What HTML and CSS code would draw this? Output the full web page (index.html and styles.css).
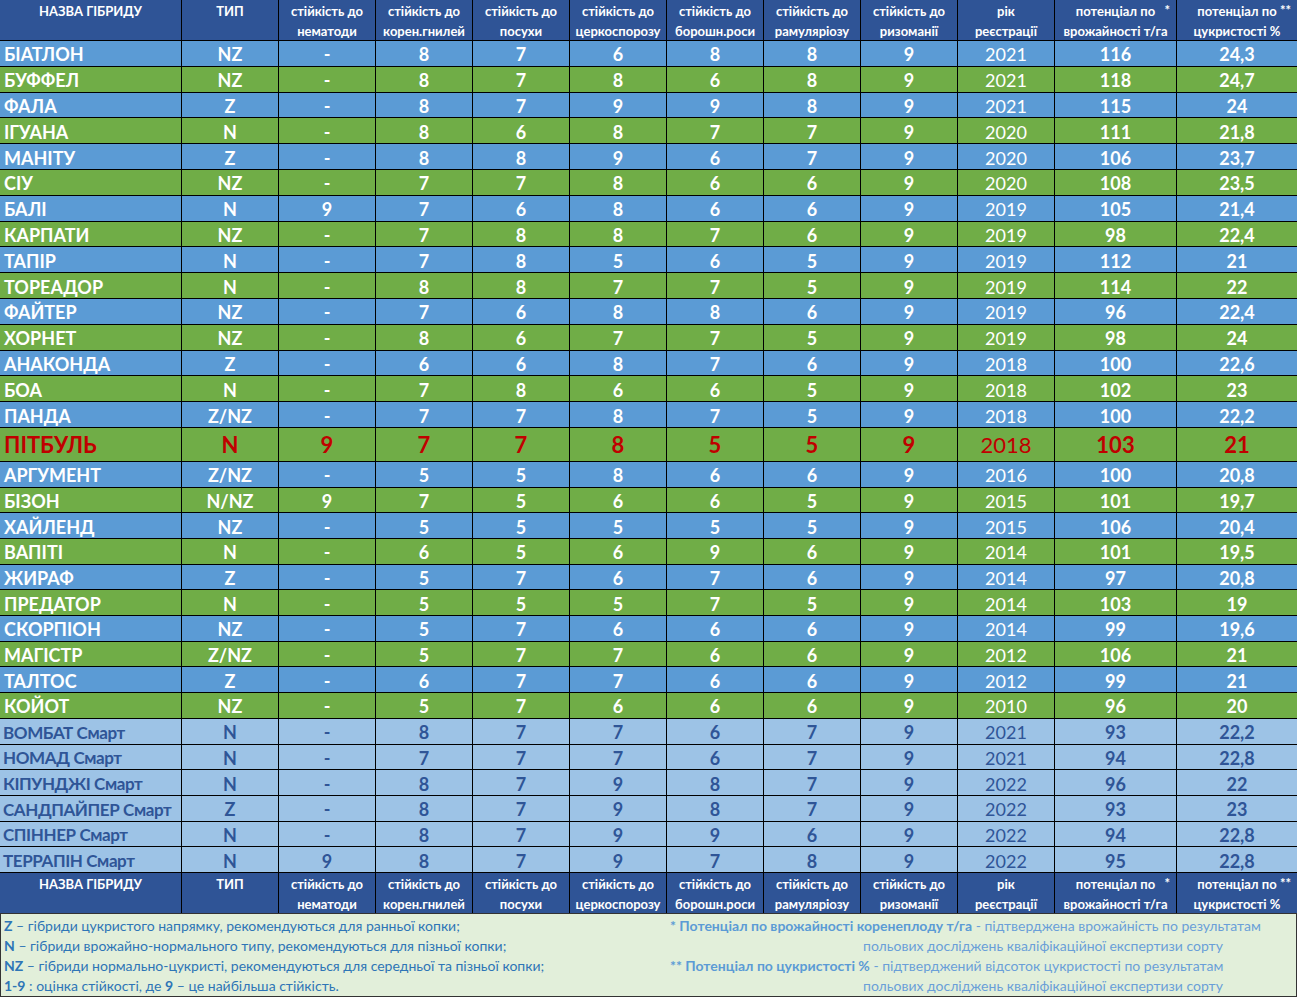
FILE: index.html
```html
<!DOCTYPE html>
<html lang="uk">
<head>
<meta charset="utf-8">
<title>Гібриди цукрового буряка</title>
<link rel="stylesheet" href="styles.css">
</head>
<body>
<div class="sheet">
  <div class="r h">
    <div>НАЗВА ГІБРИДУ</div><div>ТИП</div>
    <div>стійкість до<br>нематоди</div><div>стійкість до<br>корен.гнилей</div><div>стійкість до<br>посухи</div><div>стійкість до<br>церкоспорозу</div><div>стійкість до<br>борошн.роси</div><div>стійкість до<br>рамуляріозу</div><div>стійкість до<br>ризоманії</div><div>рік<br>реєстрації</div><div><span class="star">потенціал по <i>*</i></span>врожайності т/га</div><div><span class="star">потенціал по <i>**</i></span>цукристості %</div>
  </div>
  <div class="r b"><div>БІАТЛОН</div><div>NZ</div><div>-</div><div>8</div><div>7</div><div>6</div><div>8</div><div>8</div><div>9</div><div class="y">2021</div><div>116</div><div>24,3</div></div>
  <div class="r g"><div>БУФФЕЛ</div><div>NZ</div><div>-</div><div>8</div><div>7</div><div>8</div><div>6</div><div>8</div><div>9</div><div class="y">2021</div><div>118</div><div>24,7</div></div>
  <div class="r b"><div>ФАЛА</div><div>Z</div><div>-</div><div>8</div><div>7</div><div>9</div><div>9</div><div>8</div><div>9</div><div class="y">2021</div><div>115</div><div>24</div></div>
  <div class="r g"><div>ІГУАНА</div><div>N</div><div>-</div><div>8</div><div>6</div><div>8</div><div>7</div><div>7</div><div>9</div><div class="y">2020</div><div>111</div><div>21,8</div></div>
  <div class="r b"><div>МАНІТУ</div><div>Z</div><div>-</div><div>8</div><div>8</div><div>9</div><div>6</div><div>7</div><div>9</div><div class="y">2020</div><div>106</div><div>23,7</div></div>
  <div class="r g"><div>СІУ</div><div>NZ</div><div>-</div><div>7</div><div>7</div><div>8</div><div>6</div><div>6</div><div>9</div><div class="y">2020</div><div>108</div><div>23,5</div></div>
  <div class="r b"><div>БАЛІ</div><div>N</div><div>9</div><div>7</div><div>6</div><div>8</div><div>6</div><div>6</div><div>9</div><div class="y">2019</div><div>105</div><div>21,4</div></div>
  <div class="r g"><div>КАРПАТИ</div><div>NZ</div><div>-</div><div>7</div><div>8</div><div>8</div><div>7</div><div>6</div><div>9</div><div class="y">2019</div><div>98</div><div>22,4</div></div>
  <div class="r b"><div>ТАПІР</div><div>N</div><div>-</div><div>7</div><div>8</div><div>5</div><div>6</div><div>5</div><div>9</div><div class="y">2019</div><div>112</div><div>21</div></div>
  <div class="r g"><div>ТОРЕАДОР</div><div>N</div><div>-</div><div>8</div><div>8</div><div>7</div><div>7</div><div>5</div><div>9</div><div class="y">2019</div><div>114</div><div>22</div></div>
  <div class="r b"><div>ФАЙТЕР</div><div>NZ</div><div>-</div><div>7</div><div>6</div><div>8</div><div>8</div><div>6</div><div>9</div><div class="y">2019</div><div>96</div><div>22,4</div></div>
  <div class="r g"><div>ХОРНЕТ</div><div>NZ</div><div>-</div><div>8</div><div>6</div><div>7</div><div>7</div><div>5</div><div>9</div><div class="y">2019</div><div>98</div><div>24</div></div>
  <div class="r b"><div>АНАКОНДА</div><div>Z</div><div>-</div><div>6</div><div>6</div><div>8</div><div>7</div><div>6</div><div>9</div><div class="y">2018</div><div>100</div><div>22,6</div></div>
  <div class="r g"><div>БОА</div><div>N</div><div>-</div><div>7</div><div>8</div><div>6</div><div>6</div><div>5</div><div>9</div><div class="y">2018</div><div>102</div><div>23</div></div>
  <div class="r b"><div>ПАНДА</div><div>Z/NZ</div><div>-</div><div>7</div><div>7</div><div>8</div><div>7</div><div>5</div><div>9</div><div class="y">2018</div><div>100</div><div>22,2</div></div>
  <div class="r p"><div>ПІТБУЛЬ</div><div>N</div><div>9</div><div>7</div><div>7</div><div>8</div><div>5</div><div>5</div><div>9</div><div class="y">2018</div><div>103</div><div>21</div></div>
  <div class="r b"><div>АРГУМЕНТ</div><div>Z/NZ</div><div>-</div><div>5</div><div>5</div><div>8</div><div>6</div><div>6</div><div>9</div><div class="y">2016</div><div>100</div><div>20,8</div></div>
  <div class="r g"><div>БІЗОН</div><div>N/NZ</div><div>9</div><div>7</div><div>5</div><div>6</div><div>6</div><div>5</div><div>9</div><div class="y">2015</div><div>101</div><div>19,7</div></div>
  <div class="r b"><div>ХАЙЛЕНД</div><div>NZ</div><div>-</div><div>5</div><div>5</div><div>5</div><div>5</div><div>5</div><div>9</div><div class="y">2015</div><div>106</div><div>20,4</div></div>
  <div class="r g"><div>ВАПІТІ</div><div>N</div><div>-</div><div>6</div><div>5</div><div>6</div><div>9</div><div>6</div><div>9</div><div class="y">2014</div><div>101</div><div>19,5</div></div>
  <div class="r b"><div>ЖИРАФ</div><div>Z</div><div>-</div><div>5</div><div>7</div><div>6</div><div>7</div><div>6</div><div>9</div><div class="y">2014</div><div>97</div><div>20,8</div></div>
  <div class="r g"><div>ПРЕДАТОР</div><div>N</div><div>-</div><div>5</div><div>5</div><div>5</div><div>7</div><div>5</div><div>9</div><div class="y">2014</div><div>103</div><div>19</div></div>
  <div class="r b"><div>СКОРПІОН</div><div>NZ</div><div>-</div><div>5</div><div>7</div><div>6</div><div>6</div><div>6</div><div>9</div><div class="y">2014</div><div>99</div><div>19,6</div></div>
  <div class="r g"><div>МАГІСТР</div><div>Z/NZ</div><div>-</div><div>5</div><div>7</div><div>7</div><div>6</div><div>6</div><div>9</div><div class="y">2012</div><div>106</div><div>21</div></div>
  <div class="r b"><div>ТАЛТОС</div><div>Z</div><div>-</div><div>6</div><div>7</div><div>7</div><div>6</div><div>6</div><div>9</div><div class="y">2012</div><div>99</div><div>21</div></div>
  <div class="r g"><div>КОЙОТ</div><div>NZ</div><div>-</div><div>5</div><div>7</div><div>6</div><div>6</div><div>6</div><div>9</div><div class="y">2010</div><div>96</div><div>20</div></div>
  <div class="r s"><div>ВОМБАТ Смарт</div><div>N</div><div>-</div><div>8</div><div>7</div><div>7</div><div>6</div><div>7</div><div>9</div><div class="y">2021</div><div>93</div><div>22,2</div></div>
  <div class="r s"><div>НОМАД Смарт</div><div>N</div><div>-</div><div>7</div><div>7</div><div>7</div><div>6</div><div>7</div><div>9</div><div class="y">2021</div><div>94</div><div>22,8</div></div>
  <div class="r s"><div>КІПУНДЖІ Смарт</div><div>N</div><div>-</div><div>8</div><div>7</div><div>9</div><div>8</div><div>7</div><div>9</div><div class="y">2022</div><div>96</div><div>22</div></div>
  <div class="r s"><div>САНДПАЙПЕР Смарт</div><div>Z</div><div>-</div><div>8</div><div>7</div><div>9</div><div>8</div><div>7</div><div>9</div><div class="y">2022</div><div>93</div><div>23</div></div>
  <div class="r s"><div>СПІННЕР Смарт</div><div>N</div><div>-</div><div>8</div><div>7</div><div>9</div><div>9</div><div>6</div><div>9</div><div class="y">2022</div><div>94</div><div>22,8</div></div>
  <div class="r s"><div>ТЕРРАПІН Смарт</div><div>N</div><div>9</div><div>8</div><div>7</div><div>9</div><div>7</div><div>8</div><div>9</div><div class="y">2022</div><div>95</div><div>22,8</div></div>
  <div class="r h">
    <div>НАЗВА ГІБРИДУ</div><div>ТИП</div>
    <div>стійкість до<br>нематоди</div><div>стійкість до<br>корен.гнилей</div><div>стійкість до<br>посухи</div><div>стійкість до<br>церкоспорозу</div><div>стійкість до<br>борошн.роси</div><div>стійкість до<br>рамуляріозу</div><div>стійкість до<br>ризоманії</div><div>рік<br>реєстрації</div><div><span class="star">потенціал по <i>*</i></span>врожайності т/га</div><div><span class="star">потенціал по <i>**</i></span>цукристості %</div>
  </div>
</div>
<div class="notes">
  <div class="left">
    <p><b>Z</b> – гібриди цукристого напрямку, рекомендуються для ранньої копки;</p>
    <p><b>N</b> – гібриди врожайно-нормального типу, рекомендуються для пізньої копки;</p>
    <p><b>NZ</b> – гібриди нормально-цукристі, рекомендуються для середньої та пізньої копки;</p>
    <p><b>1-9</b> : оцінка стійкості, де <b>9</b> – це найбільша стійкість.</p>
  </div>
  <div class="right">
    <p><b>* Потенціал по врожайності коренеплоду т/га</b> - підтверджена врожайність по результатам</p>
    <p class="ind">польових досліджень кваліфікаційної експертизи сорту</p>
    <p><b>** Потенціал по цукристості %</b> - підтверджений відсоток цукристості по результатам</p>
    <p class="ind">польових досліджень кваліфікаційної експертизи сорту</p>
  </div>
</div>
</body>
</html>
```
FILE: styles.css
```css
html, body {
  margin: 0;
  padding: 0;
  background: #ffffff;
}

body {
  width: 1297px;
  font-family: Lato, "Open Sans", "Liberation Sans", sans-serif;
}

.sheet {
  display: grid;
  grid-template-columns: 181px repeat(9, 96px) 121px 120px;
  grid-template-rows: 40px repeat(15, 24.8px) 33px repeat(16, 24.7px) 40px;
  gap: 1px;
  background: #000000;
  width: 1297px;
}

.r {
  display: contents;
}

.r > div {
  display: flex;
  align-items: center;
  justify-content: center;
  color: #ffffff;
  font-weight: 700;
  font-size: 18px;
  white-space: nowrap;
  overflow: hidden;
  line-height: 1;
  padding-top: 2px;
  box-sizing: border-box;
}

.r > div:first-child {
  justify-content: flex-start;
  padding-left: 4px;
}

.r > div.y {
  font-weight: 400;
}

.b > div { background: #5b9bd5; }
.g > div { background: #70ad47; }

.p > div {
  background: #70ad47;
  color: #c00000;
  font-size: 22px;
}

.s > div {
  background: #9dc3e6;
  color: #2f5597;
}

.s > div:first-child {
  font-size: 17px;
  letter-spacing: -0.4px;
  padding-left: 3px;
}

.h > div,
.h > div:first-child {
  background: #2f5496;
  font-size: 13px;
  line-height: 20px;
  flex-direction: column;
  justify-content: flex-start;
  align-items: center;
  padding: 1px 0 0 0;
  text-align: center;
}

.star {
  display: block;
  position: relative;
  width: 100%;
  text-align: center;
}

.star i {
  font-style: normal;
  position: absolute;
  right: 6px;
  top: -1px;
}

.notes {
  display: grid;
  grid-template-columns: 666px 1fr;
  box-sizing: border-box;
  width: 1297px;
  height: 84px;
  background: #e2efda;
  border: 1px solid #333333;
  padding: 2px 0 0 3px;
  font-size: 14px;
  line-height: 20px;
  white-space: nowrap;
}

.notes p {
  margin: 0;
}

.left {
  color: #2e75b6;
}

.left b {
  color: #2e75b6;
}

.right {
  color: #6a9fd8;
}

.right b {
  color: #5b9bd5;
}

.right .ind {
  padding-left: 193px;
}
```
